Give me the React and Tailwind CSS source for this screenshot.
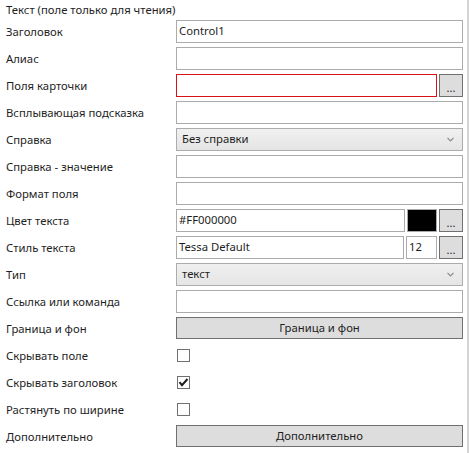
import React from 'react';

const font = { fontFamily: '"Segoe UI", "Noto Sans", sans-serif' };

function TextBox({ value, className = '', red }) {
  return (
    <div
      className={`h-[23px] flex items-center px-[2px] bg-white border ${red ? 'border-[#d8121b]' : 'border-[#ababab]'} text-[11.3px] text-[#1e1e1e] ${className}`}
    >
      {value}
    </div>
  );
}

function Dots() {
  return (
    <div className="w-[24px] h-[23px] shrink-0 bg-[#dddddd] border border-[#707070] flex items-end justify-center pb-[3px] text-[11px] leading-none text-[#1e1e1e]">
      ...
    </div>
  );
}

function Select({ value }) {
  return (
    <div className="h-[23px] flex items-center justify-between pl-[5px] pr-[8px] border border-[#acacac] bg-gradient-to-b from-[#f0f0f0] to-[#e5e5e5] text-[11.3px] text-[#1e1e1e]">
      <span>{value}</span>
      <svg width="7" height="5" viewBox="0 0 7 5">
        <path d="M0.5 0.8 L3.5 3.8 L6.5 0.8" fill="none" stroke="#8a8a8a" strokeWidth="1.2" />
      </svg>
    </div>
  );
}

function Button({ label }) {
  return (
    <div className="h-[22px] flex items-center justify-center bg-[#dddddd] border border-[#707070] text-[11.3px] text-[#1e1e1e]">
      {label}
    </div>
  );
}

function Check({ checked }) {
  return (
    <div className="h-[23px] flex items-center pl-[1px]">
      <div className="w-[13px] h-[13px] border border-[#707070] bg-white flex items-center justify-center">
        {checked && (
          <svg width="11" height="11" viewBox="0 0 11 11">
            <path d="M1.5 5.2 L4 8.2 L9.5 2" fill="none" stroke="#1e1e1e" strokeWidth="2" />
          </svg>
        )}
      </div>
    </div>
  );
}

const rows = [
  ['Заголовок', <TextBox value="Control1" />],
  ['Алиас', <TextBox />],
  [
    'Поля карточки',
    <div className="flex gap-[2px]">
      <TextBox red className="flex-1" />
      <Dots />
    </div>,
  ],
  ['Всплывающая подсказка', <TextBox />],
  ['Справка', <Select value="Без справки" />],
  ['Справка - значение', <TextBox />],
  ['Формат поля', <TextBox />],
  [
    'Цвет текста',
    <div className="flex gap-[2px]">
      <TextBox value="#FF000000" className="flex-1" />
      <div className="w-[30px] h-[23px] shrink-0 bg-black border border-[#ababab]" />
      <Dots />
    </div>,
  ],
  [
    'Стиль текста',
    <div className="flex gap-[2px]">
      <TextBox value="Tessa Default" className="flex-1" />
      <TextBox value="12" className="w-[31px] shrink-0" />
      <Dots />
    </div>,
  ],
  ['Тип', <Select value="текст" />],
  ['Ссылка или команда', <TextBox />],
  ['Граница и фон', <Button label="Граница и фон" />],
  ['Скрывать поле', <Check />],
  ['Скрывать заголовок', <Check checked />],
  ['Растянуть по ширине', <Check />],
  ['Дополнительно', <Button label="Дополнительно" />],
];

export default function App() {
  return (
    <div className="w-[471px] h-[453px] bg-white flex overflow-hidden" style={font}>
      <div className="w-[467px] pl-[6px] pr-[4px]">
        <div className="h-[20px] flex items-center text-[11.3px] text-[#1e1e1e]">
          Текст (поле только для чтения)
        </div>
        <div className="grid grid-cols-[170px_1fr] gap-y-[4px]">
          {rows.map(([label, control], i) => (
            <React.Fragment key={i}>
              <div className="h-[23px] flex items-center pt-[2px] text-[11.3px] text-[#1e1e1e] whitespace-nowrap">
                {label}
              </div>
              <div>{control}</div>
            </React.Fragment>
          ))}
        </div>
      </div>
      <div className="w-[2px] h-full bg-[#d4d4d4]" />
    </div>
  );
}
